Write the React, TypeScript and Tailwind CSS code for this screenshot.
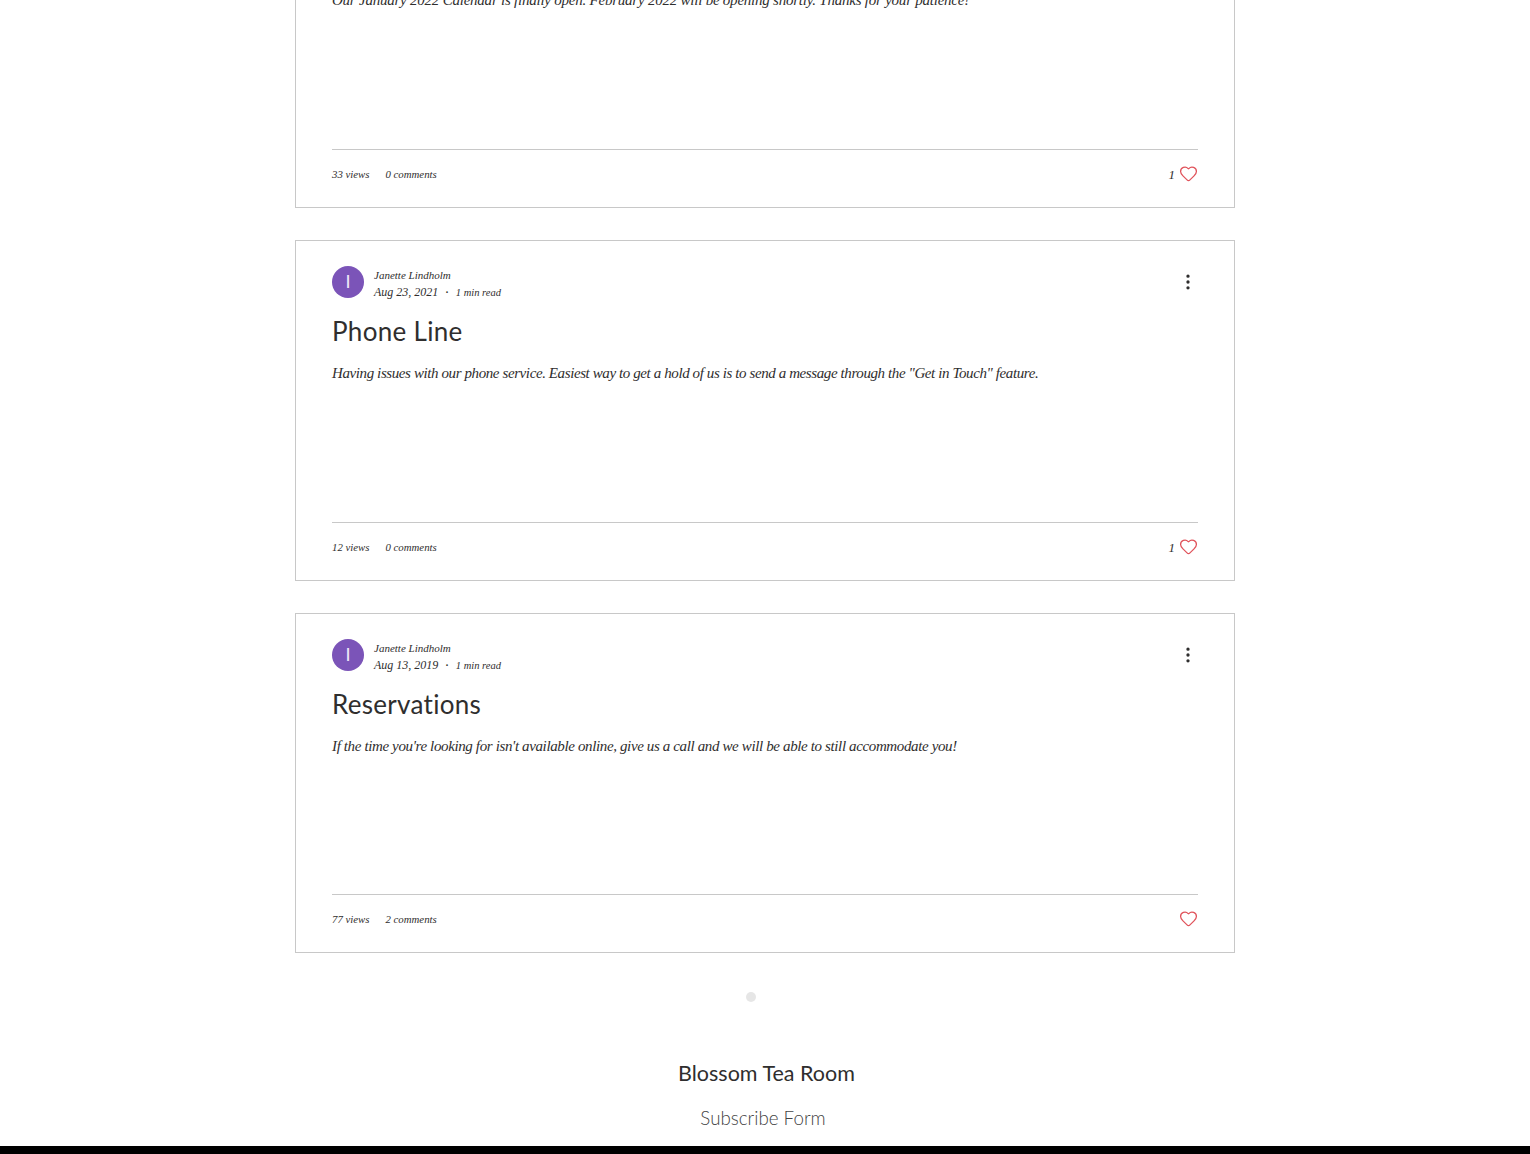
import { Heart, MoreVertical } from 'lucide-react'

interface Post {
  date: string
  title: string
  excerpt: string
  excerptClass: string
  views: string
  comments: string
  likes?: number
  cardClass: string
}

const script = "font-['Liberation_Serif',serif] italic"
const futura = "font-['Lato',sans-serif]"

const posts: Post[] = [
  {
    date: 'Aug 23, 2021',
    title: 'Phone Line',
    excerpt:
      'Having issues with our phone service. Easiest way to get a hold of us is to send a message through the "Get in Touch" feature.',
    excerptClass: 'tracking-[-0.4px]',
    views: '12 views',
    comments: '0 comments',
    likes: 1,
    cardClass: 'h-[341px]',
  },
  {
    date: 'Aug 13, 2019',
    title: 'Reservations',
    excerpt:
      "If the time you're looking for isn't available online, give us a call and we will be able to still accommodate you!",
    excerptClass: 'tracking-[-0.37px]',
    views: '77 views',
    comments: '2 comments',
    cardClass: 'h-[340px]',
  },
]

const CardFooter = ({ views, comments, likes }: Pick<Post, 'views' | 'comments' | 'likes'>) => (
  <div className="mt-auto h-[58px] pb-[8px] border-t border-[#c8c8c8] flex items-center justify-between text-[#2f2e2e]">
    <div className={`flex items-center gap-[16px] text-[10.8px] ${script}`}>
      <span>{views}</span>
      <span>{comments}</span>
    </div>
    <div className="flex items-center gap-[4px]">
      {likes && <span className={`text-[13px] ${script}`}>{likes}</span>}
      <Heart size={19} strokeWidth={1.6} className="text-[#e0525a] -mt-[3px]" />
    </div>
  </div>
)

const PostCard = ({ post }: { post: Post }) => (
  <article className={`w-[940px] border border-[#c8c8c8] px-[36px] flex flex-col ${post.cardClass}`}>
    <div className="flex items-center justify-between pt-[23px]">
      <div className="flex items-center gap-[10px]">
        <div className={`w-8 h-8 rounded-full bg-[#7b54b8] flex items-center justify-center text-[#efe8f8] text-[18px] ${futura}`}>
          I
        </div>
        <div className={`${script} text-[#2f2e2e] leading-[17px] pt-[3px] -mb-[2px]`}>
          <div className="text-[11px]">Janette Lindholm</div>
          <div className="text-[10.5px] flex items-center">
            <span className="text-[12px]">{post.date}</span>
            <span className="mx-[7px] not-italic font-bold">·</span>
            <span>1 min read</span>
          </div>
        </div>
      </div>
      <MoreVertical size={20} className="text-[#2f2e2e]" />
    </div>
    <h2 className={`${futura} text-[26px] leading-[36px] text-[#2f2e2e] mt-[14px] tracking-[0.3px]`}>
      {post.title}
    </h2>
    <p className={`${script} text-[15px] leading-[24px] text-[#2f2e2e] mt-[12px] ${post.excerptClass}`}>
      {post.excerpt}
    </p>
    <CardFooter views={post.views} comments={post.comments} likes={post.likes} />
  </article>
)

export default function App() {
  return (
    <div className="h-[1154px] overflow-hidden bg-white flex flex-col items-center">
      <div className="-mt-[133px] flex flex-col gap-[32px]">
        <article className="w-[940px] h-[341px] border border-[#c8c8c8] px-[36px] flex flex-col">
          <p className={`${script} text-[15px] leading-[24px] text-[#2f2e2e] mt-[120px] tracking-[-0.23px]`}>
            Our January 2022 Calendar is finally open. February 2022 will be opening shortly. Thanks for your patience!
          </p>
          <CardFooter views="33 views" comments="0 comments" likes={1} />
        </article>
        {posts.map((post) => (
          <PostCard key={post.title} post={post} />
        ))}
      </div>

      <div className="mt-[39px] w-[10px] h-[10px] rounded-full bg-[#e6e6e6] -translate-x-[14px]" />

      <div className={`mt-[55px] flex flex-col items-center ${futura} text-[#2f2e2e]`}>
        <div className="text-[21.5px] leading-[32px] pl-[3px]">Blossom Tea Room</div>
        <div className="text-[18.75px] leading-[24px] font-light mt-[17px] text-[#444444] -translate-x-[2px]">Subscribe Form</div>
      </div>

      <div className="mt-auto h-[8px] w-full bg-black shrink-0" />
    </div>
  )
}
